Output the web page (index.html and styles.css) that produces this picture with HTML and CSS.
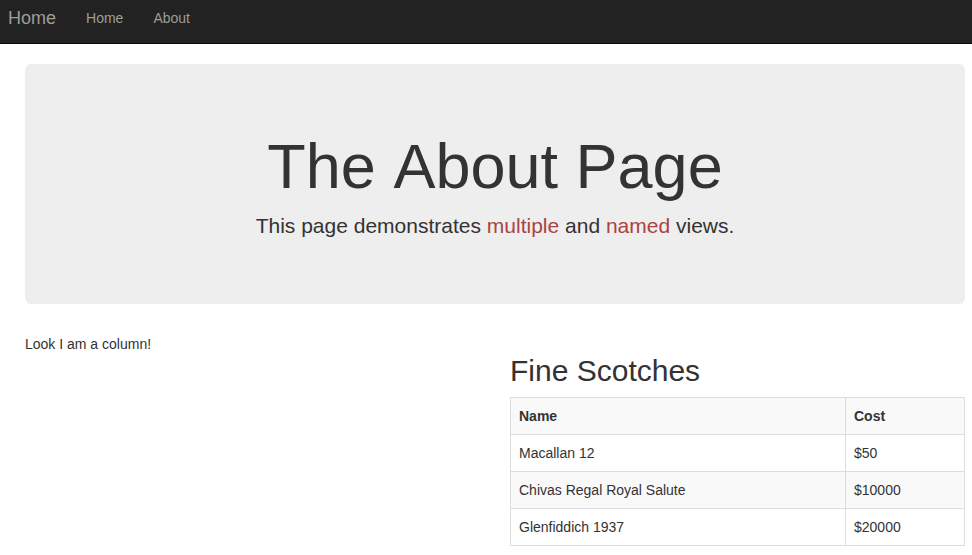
FILE: index.html
```html
<!DOCTYPE html>
<html lang="en">
<head>
<meta charset="utf-8">
<title>The About Page</title>
<link rel="stylesheet" href="styles.css">
</head>
<body>
<nav class="navbar">
  <a class="brand" href="#">Home</a>
  <ul class="nav">
    <li><a href="#">Home</a></li>
    <li><a href="#">About</a></li>
  </ul>
</nav>
<main class="container">
  <header class="jumbotron">
    <h1>The About Page</h1>
    <p>This page demonstrates <span class="danger">multiple</span> and <span class="danger">named</span> views.</p>
  </header>
  <div class="row">
    <section>Look I am a column!</section>
    <section>
      <h2>Fine Scotches</h2>
      <table class="table">
        <thead>
          <tr><th>Name</th><th class="cost">Cost</th></tr>
        </thead>
        <tbody>
          <tr><td>Macallan 12</td><td>$50</td></tr>
          <tr><td>Chivas Regal Royal Salute</td><td>$10000</td></tr>
          <tr><td>Glenfiddich 1937</td><td>$20000</td></tr>
        </tbody>
      </table>
    </section>
  </div>
</main>
</body>
</html>
```
FILE: styles.css
```css
* {
  box-sizing: border-box;
}

body {
  margin: 0;
  font: 14px/20px "Liberation Sans", Arial, sans-serif;
  font-kerning: none;
  color: #333;
  background: #fff;
}

.navbar {
  display: flex;
  align-items: flex-start;
  padding: 8px 8px 15px;
  background: #222;
  border-bottom: 1px solid #080808;
}

.navbar a {
  color: #9d9d9d;
  text-decoration: none;
}

.brand {
  font-size: 18px;
}

.nav {
  display: flex;
  gap: 30px;
  margin: 0;
  padding: 0 30px;
  list-style: none;
}

.container {
  padding: 20px 7px 9px 25px;
}

.jumbotron {
  padding: 67px 60px 63px;
  margin-bottom: 30px;
  text-align: center;
  background: #eee;
  border-radius: 6px;
}

h1 {
  margin: 0 0 10px;
  font-size: 63px;
  font-weight: 500;
  line-height: 70px;
}

.jumbotron p {
  margin: 0;
  font-size: 21px;
  line-height: 30px;
}

.danger {
  color: #a94442;
}

.row {
  display: grid;
  grid-template-columns: 1fr 1fr;
  gap: 30px;
}

h2 {
  margin: 20px 0 10px;
  font-size: 30px;
  font-weight: 500;
  line-height: 33px;
}

.table {
  width: 100%;
  border-collapse: collapse;
}

.table th,
.table td {
  padding: 8px;
  text-align: left;
  border: 1px solid #ddd;
}

.table tr {
  background: #fff;
}

.table thead tr,
.table tbody tr:nth-child(even) {
  background: #f9f9f9;
}

.table .cost {
  width: 119px;
}
```
